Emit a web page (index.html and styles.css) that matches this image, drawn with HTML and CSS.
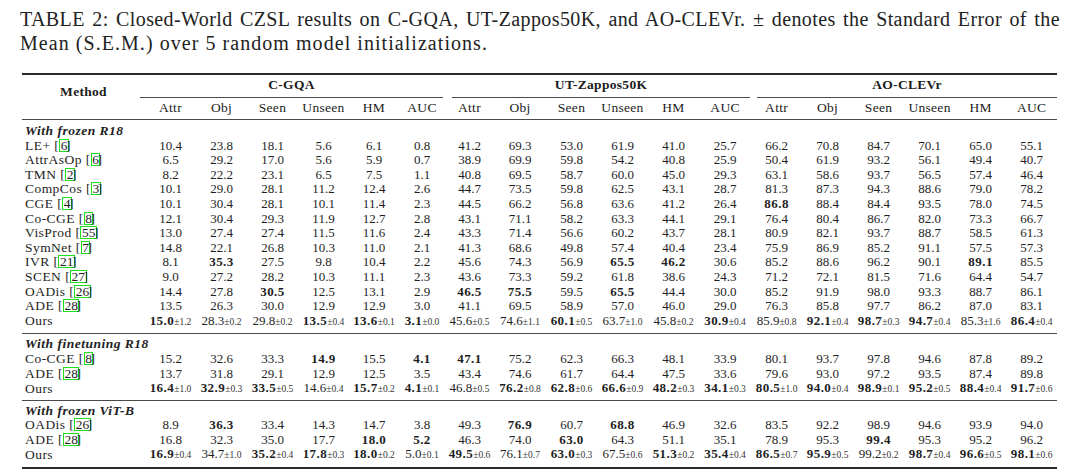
FILE: index.html
```html
<!DOCTYPE html>
<html>
<head>
<meta charset="utf-8">
<link rel="stylesheet" href="styles.css">
</head>
<body>
<div class="caption">
  <div class="l1">TABLE 2: Closed-World CZSL results on C-GQA, UT-Zappos50K, and AO-CLEVr. ± denotes the Standard Error of the</div>
  <div class="l2">Mean (S.E.M.) over 5 random model initializations.</div>
</div>
<table class="results">
  <colgroup>
    <col class="cm-w">
    <col class="w51"><col class="w51"><col class="w51"><col class="w51"><col class="w50"><col class="w46">
    <col class="w49"><col class="w52"><col class="w51"><col class="w51"><col class="w51"><col class="w52">
    <col class="w51"><col class="w51"><col class="w51"><col class="w51"><col class="w51"><col class="w51">
  </colgroup>
  <thead>
    <tr class="grp-row">
      <th rowspan="2" class="method">Method</th>
      <th colspan="6" class="grp"><div class="cmid g1">C-GQA</div></th>
      <th colspan="6" class="grp"><div class="cmid g2">UT-Zappos50K</div></th>
      <th colspan="6" class="grp"><div class="cmid g3">AO-CLEVr</div></th>
    </tr>
    <tr class="sub">
      <th>Attr</th><th>Obj</th><th>Seen</th><th>Unseen</th><th>HM</th><th>AUC</th>
      <th>Attr</th><th>Obj</th><th>Seen</th><th>Unseen</th><th>HM</th><th>AUC</th>
      <th>Attr</th><th>Obj</th><th>Seen</th><th>Unseen</th><th>HM</th><th>AUC</th>
    </tr>
  </thead>
  <tbody class="s1">
    <tr class="sec"><td colspan="19">With frozen R18</td></tr>
    <tr><td class="m">LE+ [<span class="c">6</span><span class="rb">]</span></td><td>10.4</td><td>23.8</td><td>18.1</td><td>5.6</td><td>6.1</td><td>0.8</td><td>41.2</td><td>69.3</td><td>53.0</td><td>61.9</td><td>41.0</td><td>25.7</td><td>66.2</td><td>70.8</td><td>84.7</td><td>70.1</td><td>65.0</td><td>55.1</td></tr>
    <tr><td class="m">AttrAsOp [<span class="c">6</span><span class="rb">]</span></td><td>6.5</td><td>29.2</td><td>17.0</td><td>5.6</td><td>5.9</td><td>0.7</td><td>38.9</td><td>69.9</td><td>59.8</td><td>54.2</td><td>40.8</td><td>25.9</td><td>50.4</td><td>61.9</td><td>93.2</td><td>56.1</td><td>49.4</td><td>40.7</td></tr>
    <tr><td class="m">TMN [<span class="c">2</span><span class="rb">]</span></td><td>8.2</td><td>22.2</td><td>23.1</td><td>6.5</td><td>7.5</td><td>1.1</td><td>40.8</td><td>69.5</td><td>58.7</td><td>60.0</td><td>45.0</td><td>29.3</td><td>63.1</td><td>58.6</td><td>93.7</td><td>56.5</td><td>57.4</td><td>46.4</td></tr>
    <tr><td class="m">CompCos [<span class="c">3</span><span class="rb">]</span></td><td>10.1</td><td>29.0</td><td>28.1</td><td>11.2</td><td>12.4</td><td>2.6</td><td>44.7</td><td>73.5</td><td>59.8</td><td>62.5</td><td>43.1</td><td>28.7</td><td>81.3</td><td>87.3</td><td>94.3</td><td>88.6</td><td>79.0</td><td>78.2</td></tr>
    <tr><td class="m">CGE [<span class="c">4</span><span class="rb">]</span></td><td>10.1</td><td>30.4</td><td>28.1</td><td>10.1</td><td>11.4</td><td>2.3</td><td>44.5</td><td>66.2</td><td>56.8</td><td>63.6</td><td>41.2</td><td>26.4</td><td><b>86.8</b></td><td>88.4</td><td>84.4</td><td>93.5</td><td>78.0</td><td>74.5</td></tr>
    <tr><td class="m">Co-CGE [<span class="c">8</span><span class="rb">]</span></td><td>12.1</td><td>30.4</td><td>29.3</td><td>11.9</td><td>12.7</td><td>2.8</td><td>43.1</td><td>71.1</td><td>58.2</td><td>63.3</td><td>44.1</td><td>29.1</td><td>76.4</td><td>80.4</td><td>86.7</td><td>82.0</td><td>73.3</td><td>66.7</td></tr>
    <tr><td class="m">VisProd [<span class="c">55</span><span class="rb">]</span></td><td>13.0</td><td>27.4</td><td>27.4</td><td>11.5</td><td>11.6</td><td>2.4</td><td>43.3</td><td>71.4</td><td>56.6</td><td>60.2</td><td>43.7</td><td>28.1</td><td>80.9</td><td>82.1</td><td>93.7</td><td>88.7</td><td>58.5</td><td>61.3</td></tr>
    <tr><td class="m">SymNet [<span class="c">7</span><span class="rb">]</span></td><td>14.8</td><td>22.1</td><td>26.8</td><td>10.3</td><td>11.0</td><td>2.1</td><td>41.3</td><td>68.6</td><td>49.8</td><td>57.4</td><td>40.4</td><td>23.4</td><td>75.9</td><td>86.9</td><td>85.2</td><td>91.1</td><td>57.5</td><td>57.3</td></tr>
    <tr><td class="m">IVR [<span class="c">21</span><span class="rb">]</span></td><td>8.1</td><td><b>35.3</b></td><td>27.5</td><td>9.8</td><td>10.4</td><td>2.2</td><td>45.6</td><td>74.3</td><td>56.9</td><td><b>65.5</b></td><td><b>46.2</b></td><td>30.6</td><td>85.2</td><td>88.6</td><td>96.2</td><td>90.1</td><td><b>89.1</b></td><td>85.5</td></tr>
    <tr><td class="m">SCEN [<span class="c">27</span><span class="rb">]</span></td><td>9.0</td><td>27.2</td><td>28.2</td><td>10.3</td><td>11.1</td><td>2.3</td><td>43.6</td><td>73.3</td><td>59.2</td><td>61.8</td><td>38.6</td><td>24.3</td><td>71.2</td><td>72.1</td><td>81.5</td><td>71.6</td><td>64.4</td><td>54.7</td></tr>
    <tr><td class="m">OADis [<span class="c">26</span><span class="rb">]</span></td><td>14.4</td><td>27.8</td><td><b>30.5</b></td><td>12.5</td><td>13.1</td><td>2.9</td><td><b>46.5</b></td><td><b>75.5</b></td><td>59.5</td><td><b>65.5</b></td><td>44.4</td><td>30.0</td><td>85.2</td><td>91.9</td><td>98.0</td><td>93.3</td><td>88.7</td><td>86.1</td></tr>
    <tr><td class="m">ADE [<span class="c">28</span><span class="rb">]</span></td><td>13.5</td><td>26.3</td><td>30.0</td><td>12.9</td><td>12.9</td><td>3.0</td><td>41.1</td><td>69.5</td><td>58.9</td><td>57.0</td><td>46.0</td><td>29.0</td><td>76.3</td><td>85.8</td><td>97.7</td><td>86.2</td><td>87.0</td><td>83.1</td></tr>
    <tr><td class="m">Ours</td><td><b>15.0</b><small>±1.2</small></td><td>28.3<small>±0.2</small></td><td>29.8<small>±0.2</small></td><td><b>13.5</b><small>±0.4</small></td><td><b>13.6</b><small>±0.1</small></td><td><b>3.1</b><small>±0.0</small></td><td>45.6<small>±0.5</small></td><td>74.6<small>±1.1</small></td><td><b>60.1</b><small>±0.5</small></td><td>63.7<small>±1.0</small></td><td>45.8<small>±0.2</small></td><td><b>30.9</b><small>±0.4</small></td><td>85.9<small>±0.8</small></td><td><b>92.1</b><small>±0.4</small></td><td><b>98.7</b><small>±0.3</small></td><td><b>94.7</b><small>±0.4</small></td><td>85.3<small>±1.6</small></td><td><b>86.4</b><small>±0.4</small></td></tr>
  </tbody>
  <tbody class="s2">
    <tr class="sec"><td colspan="19">With finetuning R18</td></tr>
    <tr><td class="m">Co-CGE [<span class="c">8</span><span class="rb">]</span></td><td>15.2</td><td>32.6</td><td>33.3</td><td><b>14.9</b></td><td>15.5</td><td><b>4.1</b></td><td><b>47.1</b></td><td>75.2</td><td>62.3</td><td>66.3</td><td>48.1</td><td>33.9</td><td>80.1</td><td>93.7</td><td>97.8</td><td>94.6</td><td>87.8</td><td>89.2</td></tr>
    <tr><td class="m">ADE [<span class="c">28</span><span class="rb">]</span></td><td>13.7</td><td>31.8</td><td>29.1</td><td>12.9</td><td>12.5</td><td>3.5</td><td>43.4</td><td>74.6</td><td>61.7</td><td>64.4</td><td>47.5</td><td>33.6</td><td>79.6</td><td>93.0</td><td>97.2</td><td>93.5</td><td>87.4</td><td>89.8</td></tr>
    <tr><td class="m">Ours</td><td><b>16.4</b><small>±1.0</small></td><td><b>32.9</b><small>±0.3</small></td><td><b>33.5</b><small>±0.5</small></td><td>14.6<small>±0.4</small></td><td><b>15.7</b><small>±0.2</small></td><td><b>4.1</b><small>±0.1</small></td><td>46.8<small>±0.5</small></td><td><b>76.2</b><small>±0.8</small></td><td><b>62.8</b><small>±0.6</small></td><td><b>66.6</b><small>±0.9</small></td><td><b>48.2</b><small>±0.3</small></td><td><b>34.1</b><small>±0.3</small></td><td><b>80.5</b><small>±1.0</small></td><td><b>94.0</b><small>±0.4</small></td><td><b>98.9</b><small>±0.1</small></td><td><b>95.2</b><small>±0.5</small></td><td><b>88.4</b><small>±0.4</small></td><td><b>91.7</b><small>±0.6</small></td></tr>
  </tbody>
  <tbody class="s3">
    <tr class="sec"><td colspan="19">With frozen ViT-B</td></tr>
    <tr><td class="m">OADis [<span class="c">26</span><span class="rb">]</span></td><td>8.9</td><td><b>36.3</b></td><td>33.4</td><td>14.3</td><td>14.7</td><td>3.8</td><td>49.3</td><td><b>76.9</b></td><td>60.7</td><td><b>68.8</b></td><td>46.9</td><td>32.6</td><td>83.5</td><td>92.2</td><td>98.9</td><td>94.6</td><td>93.9</td><td>94.0</td></tr>
    <tr><td class="m">ADE [<span class="c">28</span><span class="rb">]</span></td><td>16.8</td><td>32.3</td><td>35.0</td><td>17.7</td><td><b>18.0</b></td><td><b>5.2</b></td><td>46.3</td><td>74.0</td><td><b>63.0</b></td><td>64.3</td><td>51.1</td><td>35.1</td><td>78.9</td><td>95.3</td><td><b>99.4</b></td><td>95.3</td><td>95.2</td><td>96.2</td></tr>
    <tr><td class="m">Ours</td><td><b>16.9</b><small>±0.4</small></td><td>34.7<small>±1.0</small></td><td><b>35.2</b><small>±0.4</small></td><td><b>17.8</b><small>±0.3</small></td><td><b>18.0</b><small>±0.2</small></td><td>5.0<small>±0.1</small></td><td><b>49.5</b><small>±0.6</small></td><td>76.1<small>±0.7</small></td><td><b>63.0</b><small>±0.3</small></td><td>67.5<small>±0.6</small></td><td><b>51.3</b><small>±0.2</small></td><td><b>35.4</b><small>±0.4</small></td><td><b>86.5</b><small>±0.7</small></td><td><b>95.9</b><small>±0.5</small></td><td>99.2<small>±0.2</small></td><td><b>98.7</b><small>±0.4</small></td><td><b>96.6</b><small>±0.5</small></td><td><b>98.1</b><small>±0.6</small></td></tr>
  </tbody>
</table>
</body>
</html>
```
FILE: styles.css
```css
html, body {
  margin: 0;
  padding: 0;
  background: #ffffff;
}

body {
  color: #1c1c1c;
  font-family: "Liberation Serif", "Times New Roman", serif;
  width: 1080px;
  overflow: hidden;
}

.caption {
  padding: 7px 20px 0 20px;
  font-size: 20px;
  line-height: 24px;
  color: #222;
}

.caption .l1 {
  white-space: nowrap;
  letter-spacing: 0.4px;
  text-align: justify;
  text-align-last: justify;
}

.caption .l2 {
  letter-spacing: 1.05px;
}

.results {
  margin: 18px 0 0 22px;
  width: 1035px;
  table-layout: fixed;
  border-collapse: collapse;
  border-top: 2px solid #2a2a2a;
  border-bottom: 2px solid #2a2a2a;
  font-size: 13px;
}

.cm-w { width: 123px; }
.w46 { width: 46px; }
.w49 { width: 49px; }
.w50 { width: 50px; }
.w51 { width: 51px; }
.w52 { width: 52px; }

.results th {
  padding: 0;
  font-weight: normal;
  font-size: 13.5px;
  letter-spacing: 0.3px;
  white-space: nowrap;
}

.results th.method {
  vertical-align: top;
  padding-top: 9px;
  font-weight: bold;
  text-align: center;
}

.results th.grp {
  padding-top: 2px;
  font-weight: bold;
}

.cmid {
  line-height: 16px;
  padding-bottom: 4px;
  border-bottom: 1px solid #4a4a4a;
}

.g1 { margin: 0 2px 0 -5px; }
.g2 { margin: 0 1px 0 7px; }
.g3 { margin: 0 0 0 6px; }

.sub th {
  line-height: 16px;
  padding: 2px 0 3px 0;
}

thead tr.sub {
  border-bottom: 1px solid #4a4a4a;
}

.results td {
  padding: 0;
  text-align: center;
  line-height: 14.6px;
  white-space: nowrap;
  color: #1e1e1e;
}

.results td.m {
  text-align: left;
  padding-left: 3px;
  font-size: 13.5px;
  letter-spacing: 0.45px;
}

.results tr.sec td {
  text-align: left;
  padding-left: 3px;
  font-weight: bold;
  font-style: italic;
  font-size: 13.5px;
  letter-spacing: 0.5px;
}

.s1 tr.sec td { padding-top: 4px; }
.s2 tr.sec td,
.s3 tr.sec td { padding-top: 3px; }

.s1 tr:last-child td { padding-bottom: 4px; }
.s2 tr:last-child td { padding-bottom: 3px; }
.s3 tr:last-child td { padding-bottom: 4px; }

.s1, .s2 {
  border-bottom: 1px solid #4a4a4a;
}

.results b {
  letter-spacing: 0.45px;
}

.results small {
  font-size: 9.5px;
  letter-spacing: 0;
  color: #333;
}

.c {
  display: inline-block;
  line-height: 11px;
  border: 1px solid #1fe01f;
  padding: 0 0.5px;
  letter-spacing: 0;
}

.rb {
  margin-left: -3px;
}
```
